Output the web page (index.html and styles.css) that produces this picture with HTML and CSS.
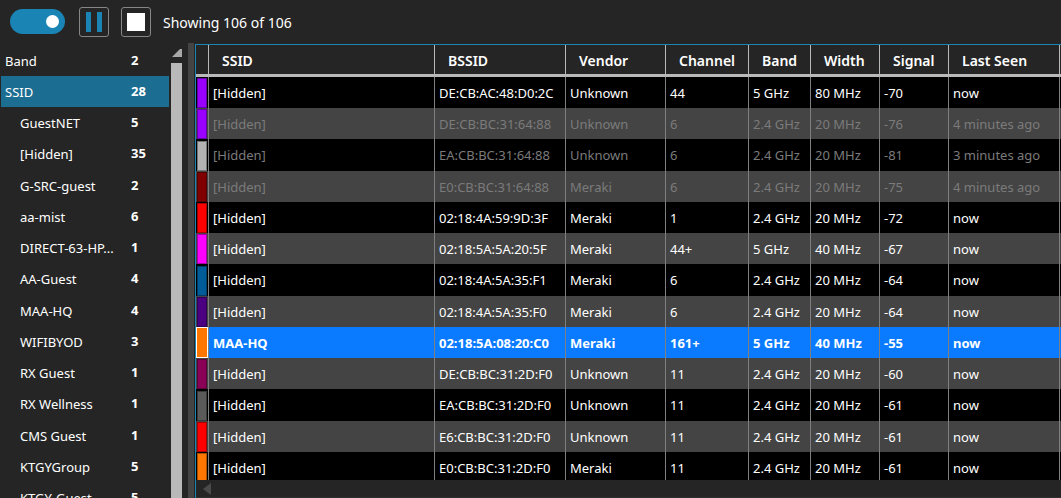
FILE: index.html
```html
<!DOCTYPE html>
<html lang="en">
<head>
<meta charset="utf-8">
<title>Networks</title>
<link rel="stylesheet" href="styles.css">
<script src="app.js" defer></script>
</head>
<body>
<div class="app">
  <header class="toolbar">
    <input class="toggle" type="checkbox" role="switch" aria-label="Scanning" checked>
    <button class="tool" type="button" aria-label="Pause">
      <svg width="28" height="28" viewBox="0 0 28 28"><path fill="#1a84b5" d="M6 4h5v20H6zM17 4h5v20h-5z"/></svg>
    </button>
    <button class="tool" type="button" aria-label="Stop">
      <svg width="28" height="28" viewBox="0 0 28 28"><path fill="#fff" d="M5 5h18v18H5z"/></svg>
    </button>
    <span class="status">Showing 106 of 106</span>
  </header>
  <main class="panes">
    <nav class="sidebar" aria-label="Filters">
      <ul class="filters" id="filters"></ul>
      <div class="scrollbar">
        <svg class="scroll-up" width="10" height="8" viewBox="0 0 10 8"><path fill="#a8a8a8" d="M0 8L8 0h2v8z"/></svg>
        <div class="thumb"></div>
      </div>
    </nav>
    <div class="splitter"></div>
    <section class="grid">
      <div class="grid-view">
        <table class="networks">
          <colgroup>
            <col class="c-color"><col class="c-ssid"><col class="c-bssid"><col class="c-vendor"><col class="c-channel"><col class="c-band"><col class="c-num"><col class="c-num"><col class="c-seen"><col class="c-rest">
          </colgroup>
          <thead>
            <tr><th></th><th>SSID</th><th>BSSID</th><th>Vendor</th><th>Channel</th><th>Band</th><th>Width</th><th>Signal</th><th>Last Seen</th><th></th></tr>
          </thead>
          <tbody id="rows"></tbody>
        </table>
      </div>
      <div class="hscroll">
        <svg width="8" height="12" viewBox="0 0 8 12"><path fill="#4a4a4a" d="M8 0v12L0 6z"/></svg>
      </div>
    </section>
  </main>
</div>
</body>
</html>
```
FILE: styles.css
```css
* { box-sizing: border-box; }

body {
  margin: 0;
  background: #252525;
  color: #fff;
  font: 14px/20px "Noto Sans", "Open Sans", sans-serif;
}

.app {
  display: flex;
  flex-direction: column;
  height: 100vh;
  overflow: hidden;
}

.toolbar {
  flex: none;
  display: flex;
  align-items: center;
  height: 43px;
  padding-left: 10px;
}

.toggle {
  appearance: none;
  display: flex;
  align-items: center;
  justify-content: flex-end;
  width: 55px;
  height: 25px;
  margin: 0 14px 0 0;
  padding-right: 6px;
  border-radius: 13px;
  background: #1a84b5;
}

.toggle::before {
  content: "";
  width: 13px;
  height: 13px;
  border-radius: 50%;
  background: #fff;
}

.tool {
  display: grid;
  place-items: center;
  width: 30px;
  height: 30px;
  margin-right: 12px;
  padding: 0;
  border: 1px solid #868686;
  border-radius: 3px;
  background: none;
}

.status {
  padding-top: 2px;
}

.panes {
  flex: 1;
  display: flex;
  min-height: 0;
}

.sidebar {
  flex: none;
  display: flex;
  width: 188px;
  padding-top: 2px;
}

.filters {
  width: 169px;
  margin: 0;
  padding: 0 0 0 1px;
  list-style: none;
}

.filter {
  display: flex;
  width: 100%;
  height: 31px;
  padding: 6px 0 5px 4px;
  border: 0;
  background: none;
  color: inherit;
  font: inherit;
  font-size: 13px;
  text-align: left;
}

li:nth-child(4n) .filter { height: 32px; }

.filter.active { background: #1b6d91; }

.name {
  width: 126px;
  white-space: nowrap;
}

.child .name { padding-left: 15px; }

.count {
  font-weight: 700;
  line-height: 18px;
}

.scrollbar {
  width: 11px;
  margin-left: 2px;
  padding-top: 4px;
}

.scroll-up {
  display: block;
  margin-left: 1px;
}

.thumb {
  height: 100%;
  margin-top: 6px;
  background: #b9b9b9;
}

.splitter {
  flex: none;
  width: 6px;
  background: #444;
}

.grid {
  flex: 1;
  display: flex;
  flex-direction: column;
  min-width: 0;
  margin: 1px 0 0 1px;
  border: solid #1a84b5;
  border-width: 1px 0 0 1px;
}

.grid-view {
  flex: 1;
  min-height: 0;
  overflow: hidden;
}

.networks {
  width: 100%;
  table-layout: fixed;
  border-collapse: separate;
  border-spacing: 0;
}

.c-color { width: 13px; }
.c-bssid { width: 131px; }
.c-vendor { width: 100px; }
.c-channel { width: 83px; }
.c-band { width: 62px; }
.c-num { width: 69px; }
.c-seen { width: 111px; }
.c-rest { width: 1px; }

th {
  height: 32px;
  padding: 2px 0 0 13px;
  border-right: 1px solid #b9b9b9;
  border-bottom: 3px solid #b9b9b9;
  font-weight: 600;
  text-align: left;
}

td {
  height: 31px;
  padding: 0 0 0 4px;
  border-right: 1px solid #7f7f7f;
  background: #000;
  font-size: 13px;
  white-space: nowrap;
}

th:first-child,
th:last-child,
td:first-child,
td:last-child { padding: 0; }

th:last-child,
td:last-child { border-right: 0; }

tr:nth-child(4n+3) td { height: 32px; }
tr:nth-child(even) td { background: #444; }
tr.stale td { color: #7b7b7b; }

tr.selected td {
  background: #0a7aff;
  font-weight: 700;
}

.swatch {
  height: 30px;
  margin: 1px 1px 0;
  border: 1px solid rgba(0, 0, 0, 0.35);
}

.selected .swatch {
  height: 31px;
  margin: 0;
  border-color: #fff;
}

.hscroll {
  flex: none;
  height: 18px;
  padding: 3px 0 0 7px;
  border-bottom: 1px solid #303030;
}

.hscroll svg { display: block; }
```
FILE: app.js
```js
const filters = [
  ["Band", 2], ["SSID", 28], ["GuestNET", 5], ["[Hidden]", 35], ["G-SRC-guest", 2],
  ["aa-mist", 6], ["DIRECT-63-HP...", 1], ["AA-Guest", 4], ["MAA-HQ", 4],
  ["WIFIBYOD", 3], ["RX Guest", 1], ["RX Wellness", 1], ["CMS Guest", 1],
  ["KTGYGroup", 5], ["KTGY-Guest", 5],
];

document.getElementById("filters").innerHTML = filters.map(([name, count], i) => `
  <li class="${i > 1 ? "child" : ""}">
    <button type="button" class="filter ${i === 1 ? "active" : ""}">
      <span class="name">${name}</span><span class="count">${count}</span>
    </button>
  </li>`).join("");

const networks = [
  ["#9900ff", "[Hidden]", "DE:CB:AC:48:D0:2C", "Unknown", "44", "5 GHz", "80 MHz", "-70", "now"],
  ["#9900ff", "[Hidden]", "DE:CB:BC:31:64:88", "Unknown", "6", "2.4 GHz", "20 MHz", "-76", "4 minutes ago"],
  ["#b3b3b3", "[Hidden]", "EA:CB:BC:31:64:88", "Unknown", "6", "2.4 GHz", "20 MHz", "-81", "3 minutes ago"],
  ["#800000", "[Hidden]", "E0:CB:BC:31:64:88", "Meraki", "6", "2.4 GHz", "20 MHz", "-75", "4 minutes ago"],
  ["#ff0000", "[Hidden]", "02:18:4A:59:9D:3F", "Meraki", "1", "2.4 GHz", "20 MHz", "-72", "now"],
  ["#ff00ff", "[Hidden]", "02:18:5A:5A:20:5F", "Meraki", "44+", "5 GHz", "40 MHz", "-67", "now"],
  ["#005b99", "[Hidden]", "02:18:4A:5A:35:F1", "Meraki", "6", "2.4 GHz", "20 MHz", "-64", "now"],
  ["#4b0082", "[Hidden]", "02:18:4A:5A:35:F0", "Meraki", "6", "2.4 GHz", "20 MHz", "-64", "now"],
  ["#ff7700", "MAA-HQ", "02:18:5A:08:20:C0", "Meraki", "161+", "5 GHz", "40 MHz", "-55", "now"],
  ["#8b0057", "[Hidden]", "DE:CB:BC:31:2D:F0", "Unknown", "11", "2.4 GHz", "20 MHz", "-60", "now"],
  ["#5a5a5a", "[Hidden]", "EA:CB:BC:31:2D:F0", "Unknown", "11", "2.4 GHz", "20 MHz", "-61", "now"],
  ["#ff0000", "[Hidden]", "E6:CB:BC:31:2D:F0", "Unknown", "11", "2.4 GHz", "20 MHz", "-61", "now"],
  ["#ff7700", "[Hidden]", "E0:CB:BC:31:2D:F0", "Meraki", "11", "2.4 GHz", "20 MHz", "-61", "now"],
];

document.getElementById("rows").innerHTML = networks.map(([color, ...cells]) => {
  const state = cells[0] === "MAA-HQ" ? "selected" : cells[7].endsWith("ago") ? "stale" : "";
  return `<tr class="${state}"><td><div class="swatch" style="background-color:${color}"></div></td>` +
    cells.map((text) => `<td>${text}</td>`).join("") + "<td></td></tr>";
}).join("");
```
